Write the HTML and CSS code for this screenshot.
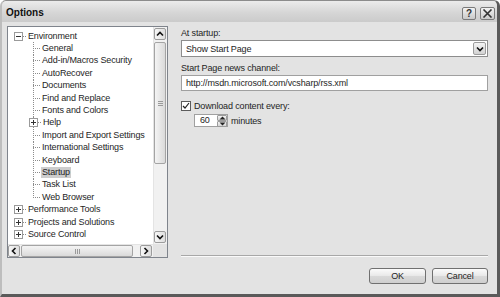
FILE: index.html
```html
<!DOCTYPE html>
<html lang="en">
<head>
  <meta charset="UTF-8">
  <title>Options</title>
  <link rel="stylesheet" href="styles.css">
</head>
<body>
  <div class="window">
    <div class="titlebar">
      <span class="title">Options</span>
      <div class="caption-btns">
        <div class="cap help">?</div>
        <div class="cap close">
          <svg width="11" height="9" viewBox="0 0 11 9"><path d="M1.5 0.5l8 8M9.5 0.5l-8 8" stroke="#333" stroke-width="1.6"/></svg>
        </div>
      </div>
    </div>

    <div class="body">
      <div class="main">
        <div class="tree">
          <ul class="tree-list">
            <li class="row root">
              <svg class="exp" width="9" height="9" viewBox="0 0 9 9"><rect x="0.5" y="0.5" width="8" height="8" fill="#fff" stroke="#9a9a9a"/><path d="M2 4.5h5" stroke="#333"/></svg>
              <span class="stub"></span><span class="label">Environment</span>
            </li>
            <li class="row child"><span class="conn"></span><span class="label">General</span></li>
            <li class="row child"><span class="conn"></span><span class="label">Add-in/Macros Security</span></li>
            <li class="row child"><span class="conn"></span><span class="label">AutoRecover</span></li>
            <li class="row child"><span class="conn"></span><span class="label">Documents</span></li>
            <li class="row child"><span class="conn"></span><span class="label">Find and Replace</span></li>
            <li class="row child"><span class="conn"></span><span class="label">Fonts and Colors</span></li>
            <li class="row child has-exp">
              <svg class="exp" width="9" height="9" viewBox="0 0 9 9"><rect x="0.5" y="0.5" width="8" height="8" fill="#fff" stroke="#9a9a9a"/><path d="M2 4.5h5M4.5 2v5" stroke="#333"/></svg>
              <span class="stub"></span><span class="label">Help</span>
            </li>
            <li class="row child"><span class="conn"></span><span class="label">Import and Export Settings</span></li>
            <li class="row child"><span class="conn"></span><span class="label">International Settings</span></li>
            <li class="row child"><span class="conn"></span><span class="label">Keyboard</span></li>
            <li class="row child"><span class="conn"></span><span class="label selected">Startup</span></li>
            <li class="row child"><span class="conn"></span><span class="label">Task List</span></li>
            <li class="row child last"><span class="conn"></span><span class="label">Web Browser</span></li>
            <li class="row root">
              <svg class="exp" width="9" height="9" viewBox="0 0 9 9"><rect x="0.5" y="0.5" width="8" height="8" fill="#fff" stroke="#9a9a9a"/><path d="M2 4.5h5M4.5 2v5" stroke="#333"/></svg>
              <span class="stub"></span><span class="label">Performance Tools</span>
            </li>
            <li class="row root">
              <svg class="exp" width="9" height="9" viewBox="0 0 9 9"><rect x="0.5" y="0.5" width="8" height="8" fill="#fff" stroke="#9a9a9a"/><path d="M2 4.5h5M4.5 2v5" stroke="#333"/></svg>
              <span class="stub"></span><span class="label">Projects and Solutions</span>
            </li>
            <li class="row root">
              <svg class="exp" width="9" height="9" viewBox="0 0 9 9"><rect x="0.5" y="0.5" width="8" height="8" fill="#fff" stroke="#9a9a9a"/><path d="M2 4.5h5M4.5 2v5" stroke="#333"/></svg>
              <span class="stub"></span><span class="label">Source Control</span>
            </li>
          </ul>

          <div class="vscroll">
            <div class="sbtn">
              <svg width="10" height="10" viewBox="0 0 10 10"><path d="M2 6.5l3-3 3 3" fill="none" stroke="#111" stroke-width="1.6"/></svg>
            </div>
            <div class="vthumb"><span class="grip"></span></div>
            <div class="sbtn">
              <svg width="10" height="10" viewBox="0 0 10 10"><path d="M2 3.5l3 3 3-3" fill="none" stroke="#111" stroke-width="1.6"/></svg>
            </div>
          </div>

          <div class="hscroll">
            <div class="sbtn">
              <svg width="10" height="10" viewBox="0 0 10 10"><path d="M6.5 2l-3 3 3 3" fill="none" stroke="#111" stroke-width="1.6"/></svg>
            </div>
            <div class="hthumb"><span class="grip"></span></div>
            <div class="sbtn">
              <svg width="10" height="10" viewBox="0 0 10 10"><path d="M3.5 2l3 3-3 3" fill="none" stroke="#111" stroke-width="1.6"/></svg>
            </div>
          </div>
          <div class="corner"></div>
        </div>

        <div class="settings">
          <div class="fields">
            <div class="field-label">At startup:</div>
            <div class="select">
              <span class="select-text">Show Start Page</span>
              <div class="drop">
                <svg width="10" height="10" viewBox="0 0 10 10"><path d="M2 3.5l3 3 3-3" fill="none" stroke="#111" stroke-width="1.6"/></svg>
              </div>
            </div>

            <div class="field-label">Start Page news channel:</div>
            <div class="textbox">http://msdn.microsoft.com/vcsharp/rss.xml</div>

            <div class="check-row">
              <span class="checkbox">
                <svg width="8" height="8" viewBox="0 0 8 8"><path d="M1 4l2 2 4-5" fill="none" stroke="#222" stroke-width="1.2"/></svg>
              </span>
              <span>Download content every:</span>
            </div>

            <div class="spin-row">
              <div class="spin">
                <span class="spin-value">60</span>
                <div class="spin-btns">
                  <span class="spin-btn"><svg width="7" height="4" viewBox="0 0 7 4"><path d="M0.5 3.5l3-3 3 3z" fill="#222"/></svg></span>
                  <span class="spin-btn"><svg width="7" height="4" viewBox="0 0 7 4"><path d="M0.5 0.5l3 3 3-3z" fill="#222"/></svg></span>
                </div>
              </div>
              <span>minutes</span>
            </div>
          </div>
          <div class="separator"></div>
        </div>
      </div>

      <div class="footer">
        <button class="btn ok">OK</button>
        <button class="btn">Cancel</button>
      </div>
    </div>
  </div>
</body>
</html>
```

FILE: styles.css
```css
body {
  margin: 0;
  background: #fff;
  font-family: 'Liberation Sans', Arial, sans-serif;
  font-size: 9px;
  letter-spacing: -0.15px;
  color: #1e1e1e;
}

.window {
  width: 500px;
  height: 297px;
  box-sizing: border-box;
  display: flex;
  flex-direction: column;
  background: #e3e3e3;
  border-top: 1px solid #8c8c8c;
  border-left: 2px solid #bdbdbd;
  border-right: 3px solid #5a5a5a;
  border-bottom: 3px solid #5a5a5a;
  border-radius: 6px 6px 0 0;
}

/* title bar */
.titlebar {
  height: 21px;
  display: flex;
  justify-content: space-between;
  padding-left: 4px;
  background: linear-gradient(#ececec, #d6d6d6 55%, #cbcbcb);
  border-radius: 5px 5px 0 0;
}

.title {
  font-size: 10px;
  font-weight: 700;
  letter-spacing: 0;
  line-height: 24px;
  color: #111;
}

.caption-btns {
  display: flex;
  gap: 4px;
  margin: 6px 2px 0 0;
}

.cap {
  height: 13px;
  width: 14px;
  box-sizing: border-box;
  border: 1px solid #7a7a7a;
  border-radius: 2px;
  background: linear-gradient(#f2f2f2, #c9c9c9);
  display: flex;
  align-items: center;
  justify-content: center;
  font-size: 10px;
  font-weight: 700;
  color: #333;
}

.cap.close {
  width: 15px;
}

/* dialog body */
.body {
  flex: 1;
  display: flex;
  flex-direction: column;
  padding: 4px 9px 0 5px;
}

.main {
  display: flex;
  height: 232px;
}

/* tree view */
.tree {
  width: 161px;
  box-sizing: border-box;
  border: 1px solid #7f848c;
  background: #fff;
  display: grid;
  grid-template-columns: 1fr 14px;
  grid-template-rows: 1fr 13px;
}

.tree-list {
  list-style: none;
  margin: 0;
  padding: 3px 0 0 0;
  overflow: hidden;
}

.row {
  height: 12.4px;
  display: flex;
  align-items: center;
  white-space: nowrap;
}

.row.root {
  padding-left: 6px;
}

.row.child {
  padding-left: 25px;
  background: repeating-linear-gradient(#8c8c8c 0 1px, transparent 1px 2px) 25px 0 / 1px 100% no-repeat;
}

.row.child.last {
  background-size: 1px 50%;
}

.row.child.has-exp {
  padding-left: 21px;
}

.exp {
  flex: none;
}

.stub {
  width: 3px;
  height: 1px;
  margin-right: 1px;
  background: repeating-linear-gradient(to right, #8c8c8c 0 1px, transparent 1px 2px);
}

.conn {
  width: 7px;
  height: 1px;
  margin-right: 1px;
  background: repeating-linear-gradient(to right, #8c8c8c 0 1px, transparent 1px 2px);
}

.label {
  padding: 0 1px;
  line-height: 11px;
}

.label.selected {
  background: #cdcdcd;
}

/* scrollbars */
.vscroll, .hscroll {
  background: #f1f1f1;
  display: flex;
}

.vscroll {
  flex-direction: column;
  border-left: 1px solid #e4e4e4;
  padding: 1px 1px 1px 0;
}

.hscroll {
  border-top: 1px solid #e4e4e4;
  padding: 0 1px 0 0;
}

.sbtn {
  width: 12px;
  height: 12px;
  box-sizing: border-box;
  border: 1px solid #9c9c9c;
  border-radius: 2px;
  background: linear-gradient(to right, #f7f7f7, #dedede);
  display: flex;
  align-items: center;
  justify-content: center;
  flex: none;
}

.vscroll .sbtn {
  width: 12px;
}

.hscroll .sbtn {
  height: 12px;
}

.vthumb {
  margin: 2px 0 0 0;
  height: 122px;
  box-sizing: border-box;
  border: 1px solid #a4a4a4;
  border-radius: 2px;
  background: linear-gradient(to right, #f4f4f4, #dadada);
  display: flex;
  align-items: center;
  justify-content: center;
  margin-bottom: auto;
}

.vthumb .grip {
  width: 5px;
  height: 5px;
  background: repeating-linear-gradient(#9a9a9a 0 1px, transparent 1px 2px);
}

.hthumb {
  margin-left: 1px;
  width: 112px;
  box-sizing: border-box;
  border: 1px solid #a4a4a4;
  border-radius: 2px;
  background: linear-gradient(#f4f4f4, #dadada);
  display: flex;
  align-items: center;
  justify-content: center;
  margin-right: auto;
}

.hthumb .grip {
  width: 5px;
  height: 5px;
  background: repeating-linear-gradient(to right, #9a9a9a 0 1px, transparent 1px 2px);
}

.corner {
  background: #e3e3e3;
}

/* settings panel */
.settings {
  flex: 1;
  margin-left: 13px;
  display: flex;
  flex-direction: column;
  justify-content: space-between;
}

.fields {
  display: flex;
  flex-direction: column;
  padding-top: 1px;
}

.field-label {
  line-height: 12px;
  margin-bottom: 1px;
}

.select {
  height: 17px;
  box-sizing: border-box;
  border: 1px solid #8d8d8d;
  background: #fff;
  display: flex;
  align-items: center;
  justify-content: space-between;
  padding: 0 1px 0 4px;
  margin-bottom: 5px;
}

.drop {
  width: 13px;
  height: 13px;
  box-sizing: border-box;
  border: 1px solid #9c9c9c;
  border-radius: 2px;
  background: linear-gradient(#f4f4f4, #d2d2d2);
  display: flex;
  align-items: center;
  justify-content: center;
}

.textbox {
  height: 16px;
  box-sizing: border-box;
  border: 1px solid #a0a0a0;
  background: #fff;
  padding: 0 4px;
  line-height: 14px;
}

.check-row {
  display: flex;
  align-items: center;
  gap: 3px;
  margin-top: 10px;
  height: 10px;
}

.checkbox {
  width: 10px;
  height: 10px;
  box-sizing: border-box;
  border: 1px solid #5c5c5c;
  background: #fff;
  display: flex;
  align-items: center;
  justify-content: center;
}

.spin-row {
  display: flex;
  align-items: center;
  gap: 3px;
  margin: 3px 0 0 13px;
}

.spin {
  display: flex;
  height: 13px;
  box-sizing: border-box;
  border: 1px solid #a0a0a0;
  background: #fff;
}

.spin-value {
  width: 22px;
  padding-left: 5px;
  box-sizing: border-box;
  line-height: 11px;
}

.spin-btns {
  display: flex;
  flex-direction: column;
  width: 10px;
}

.spin-btn {
  flex: 1;
  border: 1px solid #9c9c9c;
  border-radius: 1px;
  background: linear-gradient(#f4f4f4, #d4d4d4);
  display: flex;
  align-items: center;
  justify-content: center;
}

.separator {
  height: 1px;
  margin-bottom: 1px;
  background: #a8a8a8;
  border-bottom: 1px solid #fafafa;
}

/* footer buttons */
.footer {
  display: flex;
  justify-content: flex-end;
  gap: 6px;
  margin-top: 10px;
}

.btn {
  width: 56px;
  height: 16px;
  padding: 0;
  font-family: inherit;
  font-size: 9px;
  letter-spacing: -0.15px;
  color: #1e1e1e;
  border: 1px solid #707070;
  border-radius: 3px;
  background: linear-gradient(#fbfbfb, #e8e8e8 50%, #d9d9d9 51%, #cfcfcf);
}

.btn.ok {
  width: 57px;
}
```
